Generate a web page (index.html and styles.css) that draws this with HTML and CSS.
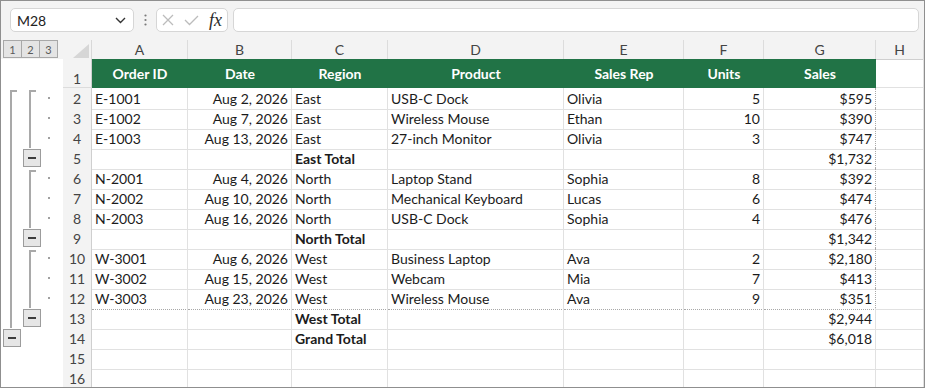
FILE: index.html
```html
<!DOCTYPE html>
<html>
<head>
<meta charset="utf-8">
<link rel="stylesheet" href="styles.css">
</head>
<body>
<div class="app">
  <div class="topbar">
    <div class="namebox"><span>M28</span>
      <svg width="11" height="7" viewBox="0 0 11 7"><polyline points="1,1 5.5,5.5 10,1" fill="none" stroke="#333" stroke-width="1.4"/></svg>
    </div>
    <svg class="vdots" width="3" height="12" viewBox="0 0 3 12"><circle cx="1.5" cy="1.5" r="1.1" fill="#7a7a7a"/><circle cx="1.5" cy="6" r="1.1" fill="#7a7a7a"/><circle cx="1.5" cy="10.5" r="1.1" fill="#7a7a7a"/></svg>
    <div class="fxbox">
      <svg width="12" height="12" viewBox="0 0 12 12"><path d="M1 1 L11 11 M11 1 L1 11" stroke="#bcbcbc" stroke-width="1.3" fill="none"/></svg>
      <svg width="15" height="11" viewBox="0 0 15 11"><polyline points="1,5 5.5,9.5 14,1" fill="none" stroke="#bcbcbc" stroke-width="1.3"/></svg>
      <span class="fx">fx</span>
    </div>
    <div class="formula"></div>
  </div>

  <div class="sheet">
    <div class="row colhdr">
      <div class="ol"><div class="lvls"><span>1</span><span>2</span><span>3</span></div></div>
      <div class="corner"><svg width="16" height="14" viewBox="0 0 16 14"><polygon points="16,0 16,14 0,14" fill="#d6d6d6"/></svg></div>
      <div class="ch">A</div><div class="ch">B</div><div class="ch">C</div><div class="ch">D</div><div class="ch">E</div><div class="ch">F</div><div class="ch">G</div><div class="ch">H</div>
    </div>

    <div class="row r1">
      <div class="ol"></div>
      <div class="rh">1</div>
      <div class="hd">Order ID</div><div class="hd">Date</div><div class="hd">Region</div><div class="hd">Product</div><div class="hd">Sales Rep</div><div class="hd">Units</div><div class="hd">Sales</div><div class="c"></div>
    </div>

    <div class="row">
      <div class="ol"><div class="l1"><div class="seg start"></div></div><div class="l2"><div class="seg start"></div></div><div class="l3"><div class="dot"></div></div></div>
      <div class="rh">2</div>
      <div class="c">E-1001</div><div class="c num">Aug 2, 2026</div><div class="c">East</div><div class="c">USB-C Dock</div><div class="c">Olivia</div><div class="c num">5</div><div class="c num pb">$595</div><div class="c"></div>
    </div>
    <div class="row">
      <div class="ol"><div class="l1"><div class="seg"></div></div><div class="l2"><div class="seg"></div></div><div class="l3"><div class="dot"></div></div></div>
      <div class="rh">3</div>
      <div class="c">E-1002</div><div class="c num">Aug 7, 2026</div><div class="c">East</div><div class="c">Wireless Mouse</div><div class="c">Ethan</div><div class="c num">10</div><div class="c num pb">$390</div><div class="c"></div>
    </div>
    <div class="row">
      <div class="ol"><div class="l1"><div class="seg"></div></div><div class="l2"><div class="seg"></div></div><div class="l3"><div class="dot"></div></div></div>
      <div class="rh">4</div>
      <div class="c">E-1003</div><div class="c num">Aug 13, 2026</div><div class="c">East</div><div class="c">27-inch Monitor</div><div class="c">Olivia</div><div class="c num">3</div><div class="c num pb">$747</div><div class="c"></div>
    </div>
    <div class="row">
      <div class="ol"><div class="l1"><div class="seg"></div></div><div class="l2"><div class="btn"><i></i></div></div><div class="l3"></div></div>
      <div class="rh">5</div>
      <div class="c"></div><div class="c"></div><div class="c b">East Total</div><div class="c"></div><div class="c"></div><div class="c"></div><div class="c num pb">$1,732</div><div class="c"></div>
    </div>

    <div class="row">
      <div class="ol"><div class="l1"><div class="seg"></div></div><div class="l2"><div class="seg start"></div></div><div class="l3"><div class="dot"></div></div></div>
      <div class="rh">6</div>
      <div class="c">N-2001</div><div class="c num">Aug 4, 2026</div><div class="c">North</div><div class="c">Laptop Stand</div><div class="c">Sophia</div><div class="c num">8</div><div class="c num pb">$392</div><div class="c"></div>
    </div>
    <div class="row">
      <div class="ol"><div class="l1"><div class="seg"></div></div><div class="l2"><div class="seg"></div></div><div class="l3"><div class="dot"></div></div></div>
      <div class="rh">7</div>
      <div class="c">N-2002</div><div class="c num">Aug 10, 2026</div><div class="c">North</div><div class="c">Mechanical Keyboard</div><div class="c">Lucas</div><div class="c num">6</div><div class="c num pb">$474</div><div class="c"></div>
    </div>
    <div class="row">
      <div class="ol"><div class="l1"><div class="seg"></div></div><div class="l2"><div class="seg"></div></div><div class="l3"><div class="dot"></div></div></div>
      <div class="rh">8</div>
      <div class="c">N-2003</div><div class="c num">Aug 16, 2026</div><div class="c">North</div><div class="c">USB-C Dock</div><div class="c">Sophia</div><div class="c num">4</div><div class="c num pb">$476</div><div class="c"></div>
    </div>
    <div class="row">
      <div class="ol"><div class="l1"><div class="seg"></div></div><div class="l2"><div class="btn"><i></i></div></div><div class="l3"></div></div>
      <div class="rh">9</div>
      <div class="c"></div><div class="c"></div><div class="c b">North Total</div><div class="c"></div><div class="c"></div><div class="c"></div><div class="c num pb">$1,342</div><div class="c"></div>
    </div>

    <div class="row">
      <div class="ol"><div class="l1"><div class="seg"></div></div><div class="l2"><div class="seg start"></div></div><div class="l3"><div class="dot"></div></div></div>
      <div class="rh">10</div>
      <div class="c">W-3001</div><div class="c num">Aug 6, 2026</div><div class="c">West</div><div class="c">Business Laptop</div><div class="c">Ava</div><div class="c num">2</div><div class="c num pb">$2,180</div><div class="c"></div>
    </div>
    <div class="row">
      <div class="ol"><div class="l1"><div class="seg"></div></div><div class="l2"><div class="seg"></div></div><div class="l3"><div class="dot"></div></div></div>
      <div class="rh">11</div>
      <div class="c">W-3002</div><div class="c num">Aug 15, 2026</div><div class="c">West</div><div class="c">Webcam</div><div class="c">Mia</div><div class="c num">7</div><div class="c num pb">$413</div><div class="c"></div>
    </div>
    <div class="row pbrow">
      <div class="ol"><div class="l1"><div class="seg"></div></div><div class="l2"><div class="seg"></div></div><div class="l3"><div class="dot"></div></div></div>
      <div class="rh">12</div>
      <div class="c">W-3003</div><div class="c num">Aug 23, 2026</div><div class="c">West</div><div class="c">Wireless Mouse</div><div class="c">Ava</div><div class="c num">9</div><div class="c num pb">$351</div><div class="c"></div>
    </div>
    <div class="row">
      <div class="ol"><div class="l1"><div class="seg"></div></div><div class="l2"><div class="btn"><i></i></div></div><div class="l3"></div></div>
      <div class="rh">13</div>
      <div class="c"></div><div class="c"></div><div class="c b">West Total</div><div class="c"></div><div class="c"></div><div class="c"></div><div class="c num">$2,944</div><div class="c"></div>
    </div>
    <div class="row">
      <div class="ol"><div class="l1"><div class="btn"><i></i></div></div><div class="l2"></div><div class="l3"></div></div>
      <div class="rh">14</div>
      <div class="c"></div><div class="c"></div><div class="c b">Grand Total</div><div class="c"></div><div class="c"></div><div class="c"></div><div class="c num">$6,018</div><div class="c"></div>
    </div>
    <div class="row">
      <div class="ol"></div>
      <div class="rh">15</div>
      <div class="c"></div><div class="c"></div><div class="c"></div><div class="c"></div><div class="c"></div><div class="c"></div><div class="c"></div><div class="c"></div>
    </div>
    <div class="row">
      <div class="ol"></div>
      <div class="rh">16</div>
      <div class="c"></div><div class="c"></div><div class="c"></div><div class="c"></div><div class="c"></div><div class="c"></div><div class="c"></div><div class="c"></div>
    </div>
  </div>
</div>
</body>
</html>
```

FILE: styles.css
```css
html, body {
  margin: 0;
  padding: 0;
  background: #ffffff;
}
body {
  font-family: Lato, "Liberation Sans", sans-serif;
  color: #1b1b1b;
}
.app {
  width: 925px;
  height: 388px;
  box-sizing: border-box;
  border: 1px solid #8f8f8f;
  overflow: hidden;
  background: #ffffff;
}
.topbar {
  height: 39px;
  box-sizing: border-box;
  background: #f3f3f3;
  display: flex;
  align-items: flex-start;
  padding: 7px 5px 0 9px;
}
.namebox {
  width: 124px;
  height: 24px;
  box-sizing: border-box;
  background: #ffffff;
  border: 1px solid #d6d6d6;
  border-radius: 5px;
  display: flex;
  align-items: center;
  justify-content: space-between;
  padding: 0 7px 0 6px;
  font-size: 14px;
  color: #222;
}
.vdots {
  margin: 6px 9px 0 10px;
}
.fxbox {
  width: 72px;
  height: 24px;
  box-sizing: border-box;
  background: #ffffff;
  border: 1px solid #d6d6d6;
  border-radius: 5px;
  display: flex;
  align-items: center;
  padding: 0 0 0 5px;
  gap: 10px;
}
.fx {
  font-family: "Liberation Serif", serif;
  font-style: italic;
  font-size: 18px;
  color: #2a2a2a;
  line-height: 1;
}
.formula {
  flex: 1;
  height: 24px;
  box-sizing: border-box;
  background: #ffffff;
  border: 1px solid #d6d6d6;
  border-radius: 5px;
  margin-left: 5px;
}

.sheet {
  font-size: 14px;
}
.row {
  display: grid;
  grid-template-columns: 62px 29px 96px 104px 96px 176px 120px 80px 112px 1fr;
  height: 20px;
}
.row.colhdr {
  height: 19px;
}
.row.r1 {
  height: 29px;
}
.row > div {
  box-sizing: border-box;
  min-width: 0;
}
.ol {
  background: #ffffff;
  display: grid;
  grid-template-columns: 20px 20px 22px;
  height: 100%;
}
.colhdr .ol {
  display: block;
  background: #f3f3f3;
}
.lvls {
  display: flex;
  margin-left: 2px;
  height: 18px;
}
.lvls span {
  width: 19px;
  height: 18px;
  box-sizing: border-box;
  border: 1px solid #a8a8a8;
  margin-left: -1px;
  background: #e4e4e4;
  font-size: 11px;
  color: #5a5a5a;
  display: flex;
  align-items: center;
  justify-content: center;
}
.lvls span:first-child {
  margin-left: 0;
}
.l1, .l2, .l3 {
  height: 100%;
}
.seg {
  height: 100%;
  border-left: 2px solid #a9a9a9;
  box-sizing: border-box;
}
.l1 .seg {
  margin-left: 9px;
}
.l2 .seg {
  margin-left: 8px;
}
.seg.start {
  margin-top: 2px;
  height: 18px;
  width: 7px;
  border-top: 2px solid #a9a9a9;
}
.btn {
  width: 18px;
  height: 18px;
  box-sizing: border-box;
  margin: 1px 0 0 2px;
  border: 1px solid #9c9c9c;
  background: #e6e6e6;
  display: flex;
  align-items: center;
  justify-content: center;
}
.btn i {
  display: block;
  width: 8px;
  height: 2px;
  background: #3c3c3c;
}
.dot {
  width: 2px;
  height: 2px;
  background: #a0a0a0;
  margin: 9px 0 0 7px;
}
.corner {
  background: #f3f3f3;
  border-right: 1px solid #d8d8d8;
  border-bottom: 1px solid #cfcfcf;
  display: flex;
  align-items: flex-end;
  justify-content: flex-end;
  padding: 0 2px 1px 0;
}
.ch {
  background: #f3f3f3;
  border-right: 1px solid #dcdcdc;
  border-bottom: 1px solid #cfcfcf;
  color: #444;
  font-size: 14px;
  text-align: center;
  line-height: 19px;
}
.rh {
  background: #f3f3f3;
  border-right: 1px solid #cfcfcf;
  border-bottom: 1px solid #dcdcdc;
  color: #444;
  text-align: center;
  line-height: 20px;
  padding-top: 1px;
}
.r1 .rh {
  line-height: 16px;
  padding-top: 0;
  display: flex;
  align-items: flex-end;
  justify-content: center;
}
.hd {
  background: #217346;
  color: #ffffff;
  font-weight: 700;
  text-align: center;
  line-height: 29px;
}
.c {
  border-right: 1px solid #e1e1e1;
  border-bottom: 1px solid #e1e1e1;
  padding: 1px 3px 0 3px;
  line-height: 20px;
  white-space: nowrap;
  overflow: visible;
}
.c.num {
  text-align: right;
}
.c.b {
  font-weight: 700;
}
.c.pb {
  border-right: 1px dotted #a8a8a8;
}
.pbrow .c {
  border-bottom: 1px dotted #a8a8a8;
}
.pbrow .c:last-child {
  border-bottom: 1px solid #e1e1e1;
}
```
